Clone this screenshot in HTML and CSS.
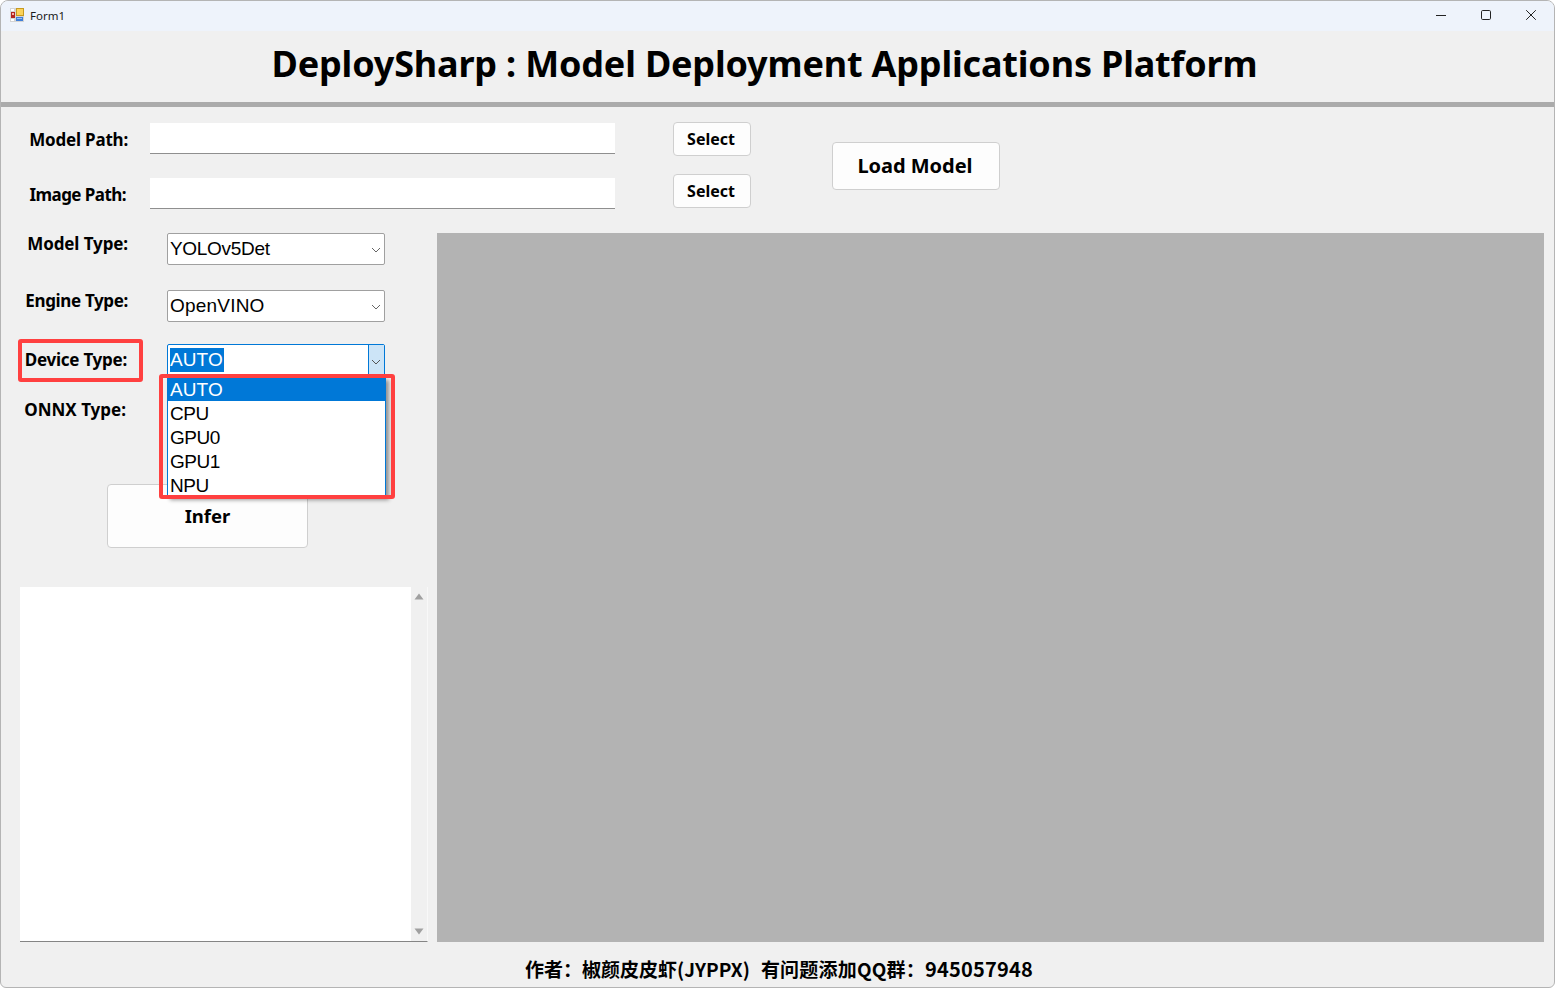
FILE: index.html
```html
<!DOCTYPE html>
<html lang="en">
<head>
<meta charset="utf-8">
<title>Form1</title>
<link rel="stylesheet" href="styles.css">
</head>
<body>
<div class="window">
  <div class="titlebar">
    <svg class="app-icon" width="14" height="14" viewBox="0 0 14 14">
      <rect x="0" y="0" width="14" height="14" fill="#d4d4d4"/>
      <rect x="1" y="1" width="3" height="2" fill="#fff"/>
      <rect x="1" y="11" width="3" height="2" fill="#fff"/>
      <rect x="6" y="11" width="7" height="2" fill="#fff"/>
      <rect x="1" y="4" width="4" height="6" fill="#b3241f"/>
      <rect x="2" y="5" width="2" height="2" fill="#f3b0a8"/>
      <rect x="6" y="0" width="8" height="8" fill="#c79a1f"/>
      <rect x="7" y="1" width="6" height="6" fill="#fbd25a"/>
      <rect x="6" y="9" width="7" height="4" fill="#3f7ed8"/>
      <rect x="7" y="10" width="5" height="1" fill="#9cc3f2"/>
    </svg>
    <span class="title-text">Form1</span>
    <div class="caption-buttons">
      <svg width="12" height="12" viewBox="0 0 12 12"><path d="M1 6.5h10" stroke="#222" stroke-width="1" fill="none"/></svg>
      <svg width="12" height="12" viewBox="0 0 12 12"><rect x="1.5" y="1.5" width="9" height="9" rx="1.2" stroke="#222" stroke-width="1" fill="none"/></svg>
      <svg width="12" height="12" viewBox="0 0 12 12"><path d="M1.2 1.2l9.6 9.6M10.8 1.2l-9.6 9.6" stroke="#222" stroke-width="1" fill="none"/></svg>
    </div>
  </div>

  <header class="app-header"><h1>DeploySharp : Model Deployment Applications Platform</h1></header>

  <main class="content">
    <section class="top-form">
      <div class="path-rows">
        <div class="path-row">
          <label class="path-label">Model Path:</label>
          <div class="path-input"></div>
          <button class="btn btn-select">Select</button>
        </div>
        <div class="path-row path-row-2">
          <label class="path-label">Image Path:</label>
          <div class="path-input"></div>
          <button class="btn btn-select">Select</button>
        </div>
      </div>
      <button class="btn btn-load">Load Model</button>
    </section>

    <section class="workspace">
      <div class="left-col">
        <div class="field field-model">
          <label class="field-label">Model Type:</label>
          <div class="combo"><span class="combo-text">YOLOv5Det</span><span class="combo-arrow"><svg width="10" height="6" viewBox="0 0 10 6"><path d="M1 1l4 4 4-4" stroke="#666" fill="none"/></svg></span></div>
        </div>
        <div class="field field-engine">
          <label class="field-label">Engine Type:</label>
          <div class="combo"><span class="combo-text">OpenVINO</span><span class="combo-arrow"><svg width="10" height="6" viewBox="0 0 10 6"><path d="M1 1l4 4 4-4" stroke="#666" fill="none"/></svg></span></div>
        </div>
        <div class="field field-device">
          <label class="field-label">Device Type:</label>
          <div class="combo combo-open"><span class="combo-text"><span class="selected-text">AUTO</span></span><span class="combo-arrow"><svg width="10" height="6" viewBox="0 0 10 6"><path d="M1 1l4 4 4-4" stroke="#555" fill="none"/></svg></span></div>
          <div class="highlight highlight-label"></div>
          <ul class="dropdown">
            <li class="option option-active">AUTO</li>
            <li class="option">CPU</li>
            <li class="option">GPU0</li>
            <li class="option">GPU1</li>
            <li class="option">NPU</li>
          </ul>
          <div class="highlight highlight-list"></div>
        </div>
        <div class="field field-onnx">
          <label class="field-label">ONNX Type:</label>
        </div>
        <button class="btn btn-infer">Infer</button>
        <div class="log-box">
          <div class="log-text"></div>
          <div class="scrollbar">
            <svg width="10" height="7" viewBox="0 0 10 7"><path d="M5 0.5L9.5 6.5H0.5z" fill="#a0a0a0"/></svg>
            <svg width="10" height="7" viewBox="0 0 10 7"><path d="M0.5 0.5H9.5L5 6.5z" fill="#a0a0a0"/></svg>
          </div>
        </div>
      </div>
      <div class="image-panel"></div>
    </section>

    <footer class="app-footer">作者：椒颜皮皮虾(JYPPX)&nbsp;&nbsp;<span class="footer-group">有问题添加QQ群：</span><span class="footer-number">945057948</span></footer>
  </main>
</div>
</body>
</html>
```
FILE: styles.css
```css
* { box-sizing: border-box; }
html, body { margin: 0; padding: 0; background: #fff; }
body { width: 1555px; height: 988px; overflow: hidden; font-family: "Noto Sans", "Noto Sans CJK SC", sans-serif; color: #000; }

.window {
  width: 1555px; height: 988px;
  display: flex; flex-direction: column;
  background: #f0f0f0;
  border: 1px solid #b4b4b4;
  border-radius: 8px 8px 6px 6px;
  overflow: hidden;
}

.titlebar {
  height: 30px; flex: none;
  display: flex; align-items: center;
  padding-left: 9px;
  padding-bottom: 2px;
  background: #eef3fb;
}
.app-icon { margin-right: 6px; }
.title-text { font-size: 11.5px; color: #1a1a1a; font-family: "Noto Sans", sans-serif; }
.caption-buttons { margin-left: auto; display: flex; gap: 33px; padding-right: 17px; }

.app-header {
  height: 71px; flex: none;
  display: flex; align-items: center; justify-content: center;
  padding-right: 26px;
  padding-bottom: 6px;
}
.app-header h1 { margin: 0; font-size: 36px; font-weight: 700; letter-spacing: -0.18px; line-height: 1; }

.content {
  flex: 1;
  border-top: 5px solid #ababab;
  padding: 15px 0 0 0;
  display: flex; flex-direction: column;
}

.top-form { display: flex; height: 111px; flex: none; align-items: flex-start; }
.path-rows { width: 831px; display: flex; flex-direction: column; }
.path-row { display: flex; align-items: center; height: 34px; }
.path-row-2 { margin-top: 18px; }
.path-label { width: 127px; text-align: right; font-size: 17px; font-weight: 700; letter-spacing: -0.2px; }
.path-row-2 .path-label { width: 125px; margin-right: 2px; padding-top: 6px; letter-spacing: -0.55px; }
.path-input { width: 465px; height: 31px; margin-left: 22px; margin-bottom: 2px; background: #fff; border-bottom: 1px solid #8f8f8f; }
.path-row-2 .path-input { margin-top: 5px; margin-bottom: 0; }

.btn {
  background: #fdfdfd;
  border: 1px solid #cfcfcf;
  border-radius: 4px;
  font-family: "Noto Sans", sans-serif;
  font-weight: 700;
  color: #000;
  padding: 0;
}
.btn-select { width: 78px; height: 34px; margin-left: 58px; padding-right: 2px; font-size: 16px; letter-spacing: -0.02px; }
.btn-load { width: 168px; height: 48px; margin-top: 20px; padding: 0 2px 2px 0; font-size: 20px; letter-spacing: -0.03px; }

.workspace { flex: 1; display: flex; min-height: 0; }
.left-col { width: 436px; flex: none; display: flex; flex-direction: column; padding-left: 19px; }

.field { display: flex; align-items: flex-start; position: relative; }
.field-label { width: 108px; text-align: right; font-size: 17px; font-weight: 700; letter-spacing: -0.1px; line-height: 22px; }
.field-model { height: 57px; }
.field-engine { height: 54px; }
.field-engine .field-label { letter-spacing: -0.35px; }
.field-device { height: 50px; }
.field-device .field-label { width: 107px; margin-right: 1px; padding-top: 5px; letter-spacing: -0.25px; }
.field-onnx { height: 90px; }
.field-onnx .field-label { width: 106px; margin-top: 5px; letter-spacing: 0; }

.combo {
  width: 218px; height: 32px; margin-left: 39px; flex: none;
  display: flex;
  background: #fff;
  border: 1px solid #a0a0a0;
  border-radius: 2px;
  font-family: "Liberation Sans", sans-serif;
  font-size: 19px;
  letter-spacing: -0.3px;
}
.field-engine .combo { letter-spacing: 0.2px; }
.combo-text { flex: 1; padding-left: 2px; line-height: 29px; }
.combo-arrow { width: 16px; display: flex; align-items: center; justify-content: center; padding-top: 2px; padding-right: 1px; }
.combo-open { border-color: #0078d7; height: 34px; letter-spacing: 0.1px; }
.combo-open .combo-arrow { background: #cce4f7; border-left: 1px solid #0078d7; padding-right: 1px; }
.selected-text { background: #0078d7; color: #fff; display: inline-block; line-height: 24px; padding-right: 1px; }

.dropdown {
  position: absolute; left: 147px; top: 33px;
  width: 219px; height: 120px;
  margin: 0; padding: 0; list-style: none;
  background: #fff;
  border: 1px solid #0078d7;
  border-top: 0;
  box-shadow: 3px 3px 4px rgba(0,0,0,.4);
  font-family: "Liberation Sans", sans-serif;
  font-size: 19px;
  letter-spacing: -0.5px;
}
.option { height: 24px; line-height: 26px; padding-left: 2px; }
.option-active { background: #0078d7; color: #fff; letter-spacing: 0.1px; }

.highlight { position: absolute; border: 4px solid #ff4040; border-radius: 3px; pointer-events: none; }
.highlight-label { left: -2px; top: -5px; width: 125px; height: 43px; }
.highlight-list { left: 139px; top: 30px; width: 236px; height: 125px; }

.btn-infer { width: 201px; height: 64px; margin-left: 87px; font-size: 18.5px; line-height: 1; flex: none; display: block; }

.log-box { display: flex; width: 408px; height: 355px; margin-top: 39px; background: #fff; border-bottom: 1px solid #858585; border-right: 1px solid #f8f8f8; flex: none; }
.log-text { flex: 1; }
.scrollbar { width: 16px; background: #f0f0f0; display: flex; flex-direction: column; justify-content: space-between; align-items: center; padding: 6px 0; }

.image-panel { width: 1107px; height: 709px; background: #b3b3b3; flex: none; }

.app-footer {
  height: 44px; flex: none;
  padding-top: 13px;
  padding-left: 524px;
  font-family: "Noto Sans CJK SC", "Noto Sans", sans-serif;
  font-size: 19px; font-weight: 700; line-height: 26px;
  word-spacing: 1.2px;
}
.footer-group { letter-spacing: 0.2px; }
.footer-number { font-size: 20px; letter-spacing: 0.2px; }
```
